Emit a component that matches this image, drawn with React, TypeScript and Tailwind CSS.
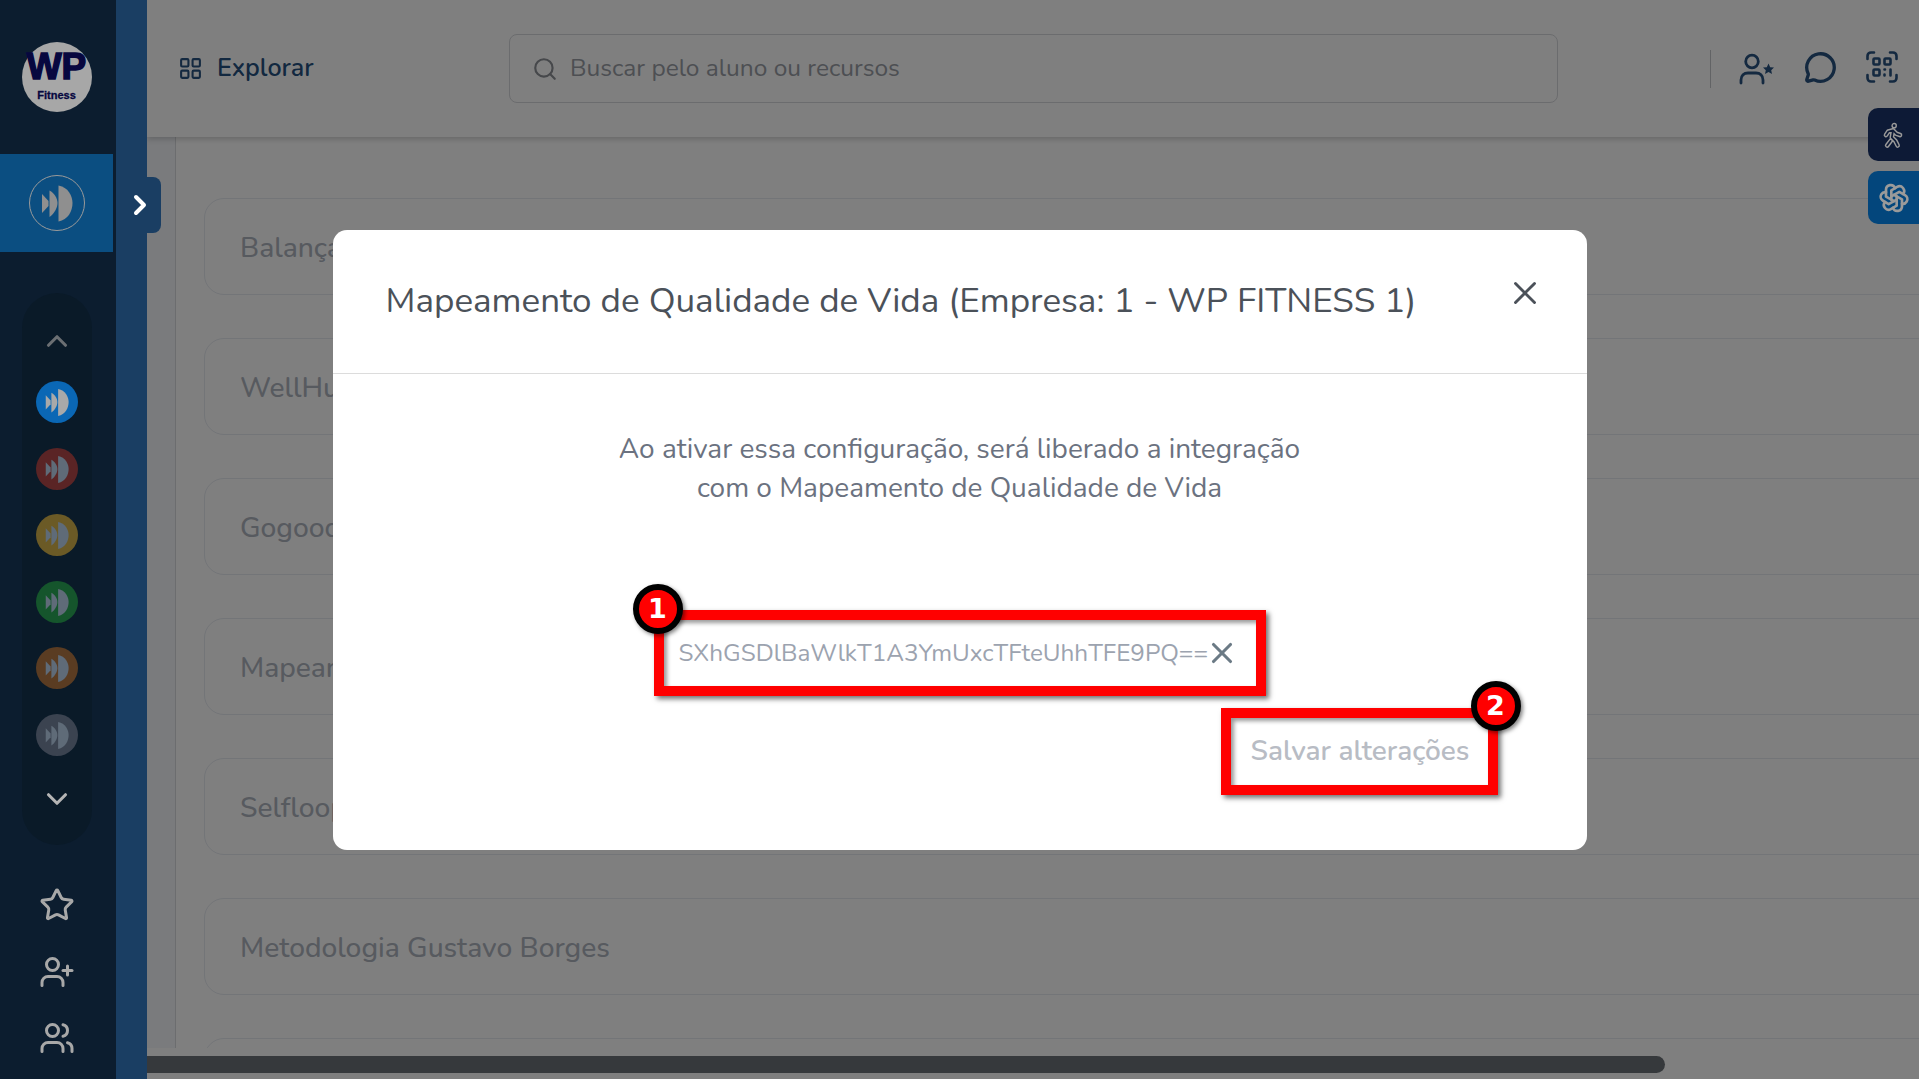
import { ChevronRight, ChevronUp, ChevronDown, Star, UserPlus, Users, LayoutGrid, Search, MessageCircle, X } from "lucide-react";
import { TbBrandOpenai } from "react-icons/tb";

const font = "font-['Nunito','Noto_Sans',sans-serif]";

function Forward({ className, fill }: { className: string; fill: string }) {
  return (
    <svg viewBox="0 0 56 56" className={className} fill={fill}>
      <path d="M29.500 10.500C39 12 43.500 21 43.500 28C43.500 36 39 45 29.500 46.500Z" />
      <path d="M20.500 15.500C25 18 28.500 23 28.500 28C28.500 33 25 39 20.500 42Z" />
      <path d="M13 19L19.500 26V31L13 38Z" />
    </svg>
  );
}

function UserStar() {
  return (
    <svg viewBox="0 0 36 32" className="w-[36px] h-[32px]" fill="none" stroke="#285280" strokeWidth="2.800" strokeLinecap="round">
      <circle cx="13" cy="8.500" r="6.300" />
      <path d="M2 30V27C2 22.500 5 20 9 20H17C21 20 24 22.500 24 27V30" />
      <path d="M29.500 10.500L31.200 14.200L35 14.600L32.200 17.200L33 21L29.500 19L26 21L26.800 17.200L24 14.600L27.800 14.200Z" fill="#285280" stroke="none" />
    </svg>
  );
}

function QrScan() {
  return (
    <svg viewBox="0 0 32 32" className="w-[32px] h-[32px] ml-[29px] mb-[3px]" fill="none" stroke="#285280" strokeWidth="2.600" strokeLinecap="round" strokeLinejoin="round">
      <path d="M1.500 8V5C1.500 3 3 1.500 5 1.500H8M24 1.500H27C29 1.500 30.500 3 30.500 5V8M30.500 24V27C30.500 29 29 30.500 27 30.500H24M8 30.500H5C3 30.500 1.500 29 1.500 27V24" />
      <rect x="7.500" y="7.500" width="6" height="6" rx="1" />
      <rect x="18.500" y="7.500" width="6" height="6" rx="1" />
      <rect x="7.500" y="18.500" width="6" height="6" rx="1" />
      <path d="M18.500 18.500H19M24.500 18.500V24.500M18.500 23.500V24.500" />
    </svg>
  );
}

function WalkOutline() {
  const body = "M7 21l3 -4M16 21l-2 -4l-3 -3l1 -6M6 12l2 -3l4 -1l3 3l3 1";
  return (
    <svg viewBox="0 0 24 24" className="w-[28px] h-[28px]" fill="none" strokeLinecap="round" strokeLinejoin="round">
      <path d={body} stroke="#9a9a9a" strokeWidth="4" />
      <path d={body} stroke="#0d1a36" strokeWidth="1.500" />
      <circle cx="13" cy="4" r="1.800" fill="#0d1a36" stroke="#9a9a9a" strokeWidth="1.200" />
    </svg>
  );
}

const sections: { bg: string; icon: string }[] = [
  { bg: "bg-[#0a67b5]", icon: "#a9a9a9" },
  { bg: "bg-[#5a2425]", icon: "#5f6b78" },
  { bg: "bg-[#6b5a26]", icon: "#5f6b78" },
  { bg: "bg-[#15552c]", icon: "#5f6b78" },
  { bg: "bg-[#5a3c22]", icon: "#5f6b78" },
  { bg: "bg-[#3b4350]", icon: "#5f6b78" },
];

const cards = ["Balança", "WellHub", "Gogood", "Mapeamento de Qualidade de Vida", "Selfloops", "Metodologia Gustavo Borges", ""];

function Badge({ n, className }: { n: string; className: string }) {
  return (
    <div className={`absolute w-[50px] h-[50px] rounded-full bg-[#ff0000] border-[6px] border-black text-white font-['DejaVu_Sans',sans-serif] font-bold text-[27px] flex items-center justify-center shadow-[2px_2px_4px_rgba(0,0,0,0.5)] ${className}`}>
      {n}
    </div>
  );
}

export default function App() {
  return (
    <div className={`relative flex w-[1919px] h-[1079px] overflow-hidden bg-white ${font}`}>
      <aside className="flex shrink-0 relative z-20">
        <div className="w-[116px] h-full bg-[#0c1d2f] flex flex-col items-center pr-[3px]">
          <div className="h-[154px] w-full flex items-center justify-center">
            <div className="w-[70px] h-[70px] rounded-full bg-[#a7a7a7] flex flex-col items-center text-[#07073f] font-['Liberation_Sans',sans-serif] font-bold">
              <span className="text-[37px] leading-none mt-[6px] tracking-[0px] [-webkit-text-stroke:1.500px_#07073f]">WP</span>
              <span className="text-[11px] leading-none mt-[5px] [-webkit-text-stroke:0.300px_#07073f]">Fitness</span>
            </div>
          </div>
          <div className="h-[98px] w-[113px] self-start bg-[#0b4e81] flex items-center justify-center">
            <div className="w-[56px] h-[56px] rounded-full border border-[#9a9a9a] flex items-center justify-center">
              <Forward className="w-[56px] h-[56px] shrink-0" fill="#8f8f8f" />
            </div>
          </div>
          <div className="mt-[41px] w-[70px] h-[552px] rounded-[35px] bg-[#0a1a28] flex flex-col items-center pt-[31px]">
            <ChevronUp size={34} strokeWidth={2.200} color="#6b6f73" className="mb-[23px]" />
            <div className="flex flex-col gap-[24.500px]">
              {sections.map((s, i) => (
                <div key={i} className={`w-[42px] h-[42px] rounded-full flex items-center justify-center ${s.bg}`}>
                  <Forward className="w-[42px] h-[42px]" fill={s.icon} />
                </div>
              ))}
            </div>
            <ChevronDown size={34} strokeWidth={2.200} color="#b5b5b5" className="mt-[26px]" />
          </div>
          <div className="mt-[42px] flex flex-col items-center gap-[30.500px] text-[#a8a8a8]">
            <Star size={36} strokeWidth={2} />
            <UserPlus size={36} strokeWidth={2} />
            <Users size={36} strokeWidth={2} />
          </div>
        </div>
        <div className="w-[31px] h-full bg-[#1a3e63] relative">
          <div className="absolute left-0 top-[177px] w-[45px] h-[56px] bg-[#1a3e63] rounded-r-[8px] flex items-center justify-start pl-[8px]">
            <ChevronRight size={32} strokeWidth={3} color="#ffffff" />
          </div>
        </div>
      </aside>

      <main className="flex-1 min-w-0 flex flex-col bg-white">
        <header className="h-[137px] shrink-0 flex items-center shadow-[0_2px_6px_rgba(0,0,0,0.2)] relative z-10 bg-white pl-[31px]">
          <LayoutGrid size={25} strokeWidth={2} color="#285280" className="mr-[14px]" />
          <span className="text-[25px] font-semibold text-[#255080] w-[292px] pt-[1px]">Explorar</span>
          <div className="w-[1049px] h-[69px] rounded-[8px] border border-[#d6d8dc] flex items-center pl-[22px]">
            <Search size={26} strokeWidth={2} color="#8d9096" />
            <span className="ml-[12px] text-[24.500px] text-[#9a9ea6]">Buscar pelo aluno ou recursos</span>
          </div>
          <div className="ml-[152px] w-px h-[38px] bg-[#c4c6ca]" />
          <div className="ml-[28px] flex items-center">
            <UserStar />
            <MessageCircle size={33} strokeWidth={2.400} color="#285280" className="ml-[29px] mb-[3px]" />
            <QrScan />
          </div>
        </header>
        <div className="flex-1 min-h-0 flex overflow-hidden">
          <div className="w-[29px] shrink-0 bg-[#f4f6fa] border-r border-[#d8dade]" />
          <div className="flex-1 min-w-0 overflow-hidden pl-[28px] pt-[61px] flex flex-col gap-[43px]">
            {cards.map((c, i) => (
              <div key={i} className="w-[2000px] h-[97px] shrink-0 rounded-[20px] border border-[#e6eaf0] flex items-center pl-[35px] pt-[3px] text-[28.200px] font-medium text-[#aeb4be]">
                {c}
              </div>
            ))}
          </div>
        </div>
        <div className="h-[31px] shrink-0 pt-[8px]">
          <div className="w-[1518px] h-[17px] rounded-r-full bg-[#6c7278]" />
        </div>
      </main>

      <div className="absolute inset-0 bg-black/50 z-10" />

      <div className="absolute right-0 top-[108px] z-20 flex flex-col gap-[10px]">
        <div className="w-[51px] h-[53px] rounded-l-[10px] bg-[#0d1a36] flex items-center pl-[11px]">
          <WalkOutline />
        </div>
        <div className="w-[51px] h-[53px] rounded-l-[10px] bg-[#03467c] flex items-center pl-[10px]">
          <TbBrandOpenai size={32} color="#9a9a9a" strokeWidth={2} />
        </div>
      </div>

      <div className="absolute inset-0 z-30 flex justify-center items-start pt-[230px]">
        <div className="w-[1254px] h-[620px] rounded-[14px] bg-white flex flex-col">
          <div className="h-[144px] shrink-0 border-b border-[#dcdcdc] flex items-start justify-between pl-[53px] pr-[43px]">
            <h2 className="text-[35px] leading-[46px] mt-[48px] text-[#4b5159] font-normal">Mapeamento de Qualidade de Vida (Empresa: 1 - WP FITNESS 1)</h2>
            <X size={38} strokeWidth={1.800} color="#4b5159" className="mt-[44px]" />
          </div>
          <div className="flex-1 flex flex-col pt-[56px]">
            <p className="text-center text-[28px] leading-[39px] text-[#6b7280]">
              Ao ativar essa configuração, será liberado a integração
              <br />
              com o Mapeamento de Qualidade de Vida
            </p>
            <div className="relative self-center mt-[102px] w-[612px] h-[86px] border-[10px] border-[#ff0000] shadow-[3px_3px_5px_rgba(0,0,0,0.55),inset_3px_3px_4px_rgba(0,0,0,0.4)] flex items-center pl-[15px]">
              <span className="text-[24.330px] text-[#9ca3af] whitespace-nowrap">SXhGSDlBaWlkT1A3YmUxcTFteUhhTFE9PQ==</span>
              <X size={34} strokeWidth={2.200} color="#6b7a85" className="shrink-0 -ml-[3px]" />
              <Badge n="1" className="left-[-31px] top-[-36px]" />
            </div>
            <div className="relative self-end mr-[89px] mt-[12px] w-[277px] h-[87px] border-[10px] border-[#ff0000] shadow-[3px_3px_5px_rgba(0,0,0,0.55),inset_3px_3px_4px_rgba(0,0,0,0.4)] flex items-center justify-center pb-[2px] pl-[2px]">
              <span className="text-[28px] font-semibold text-[#b8bcc4] whitespace-nowrap">Salvar alterações</span>
              <Badge n="2" className="right-[-33px] top-[-37px]" />
            </div>
          </div>
        </div>
      </div>
    </div>
  );
}
